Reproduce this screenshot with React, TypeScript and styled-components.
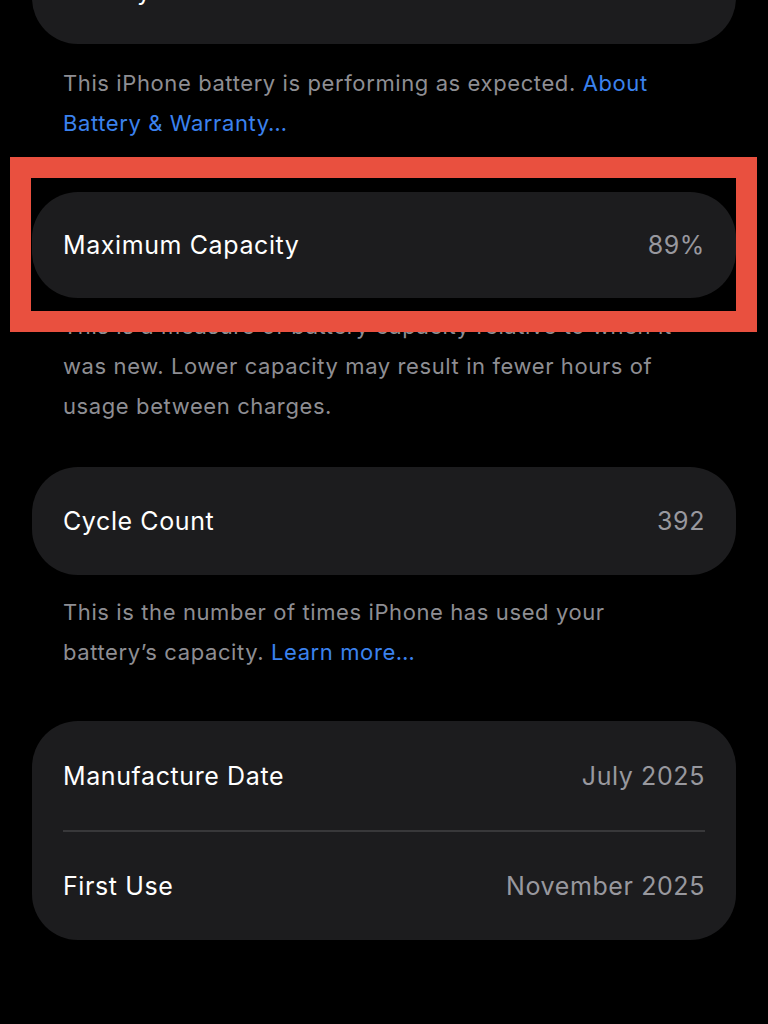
import React from "react";
import styled, { createGlobalStyle } from "styled-components";

const GlobalStyle = createGlobalStyle`
  html, body {
    margin: 0;
    padding: 0;
    background: #000;
  }
  body {
    font-family: "Inter", "Roboto", "Noto Sans", sans-serif;
    -webkit-font-smoothing: antialiased;
  }
`;

const Page = styled.div`
  position: relative;
  width: 768px;
  height: 1024px;
  overflow: hidden;
  background: #000;
  padding: 0 32px;
  box-sizing: border-box;
`;

const Card = styled.div<{ $top: number }>`
  margin-top: ${(p) => p.$top}px;
  background: #1c1c1e;
  border-radius: 46px;
  padding: 0 31px;
  display: flex;
  flex-direction: column;
`;

const Row = styled.div<{ $height: number }>`
  height: ${(p) => p.$height}px;
  display: flex;
  align-items: center;
  justify-content: space-between;
  font-size: 25px;
  letter-spacing: 0.6px;
`;

const Label = styled.span`
  color: #ffffff;
`;

const Value = styled.span`
  color: #98989e;
`;

const Divider = styled.div`
  height: 2px;
  background: #38383a;
`;

const Footnote = styled.p<{ $top: number }>`
  margin: ${(p) => p.$top}px 0 0;
  padding: 0 31px;
  font-size: 22px;
  line-height: 40px;
  color: #8e8e93;
  letter-spacing: 0.6px;
`;

const Link = styled.span`
  color: #3b82ee;
`;

const Highlight = styled.div`
  position: absolute;
  left: 10px;
  top: 157px;
  width: 747px;
  height: 175px;
  box-sizing: border-box;
  border: 21px solid #e9503f;
  pointer-events: none;
`;

const App = () => {
  return (
    <>
      <GlobalStyle />
      <Page>
        <Card $top={-62}>
          <Row $height={106}>
            <Label>Battery Health</Label>
            <Value>Normal</Value>
          </Row>
        </Card>
        <Footnote $top={19}>
          This iPhone battery is performing as expected.{" "}
          <Link>About Battery &amp; Warranty…</Link>
        </Footnote>

        <Card $top={49}>
          <Row $height={106}>
            <Label>Maximum Capacity</Label>
            <Value>89%</Value>
          </Row>
        </Card>
        <Footnote $top={8}>
          This is a measure of battery capacity relative to when it was new.
          Lower capacity may result in fewer hours of usage between charges.
        </Footnote>

        <Card $top={41}>
          <Row $height={108}>
            <Label>Cycle Count</Label>
            <Value>392</Value>
          </Row>
        </Card>
        <Footnote $top={17}>
          This is the number of times iPhone has used your battery’s capacity.{" "}
          <Link>Learn more…</Link>
        </Footnote>

        <Card $top={49}>
          <Row $height={109}>
            <Label>Manufacture Date</Label>
            <Value>July 2025</Value>
          </Row>
          <Divider />
          <Row $height={108}>
            <Label>First Use</Label>
            <Value>November 2025</Value>
          </Row>
        </Card>

        <Highlight />
      </Page>
    </>
  );
};

export default App;
